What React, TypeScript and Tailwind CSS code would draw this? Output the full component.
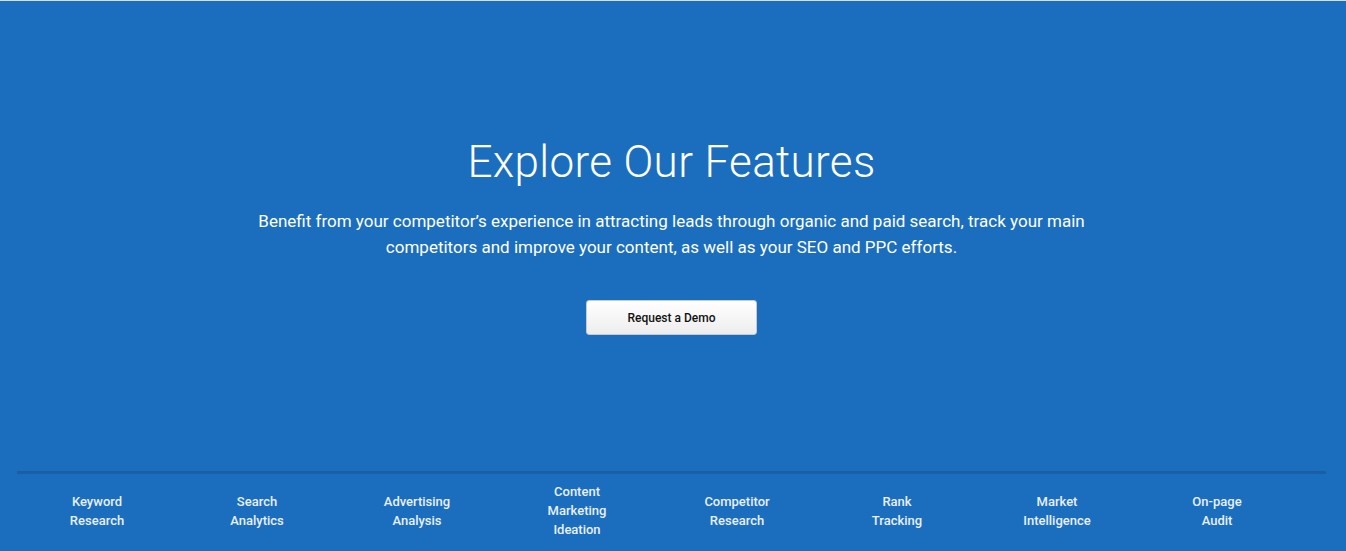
import React from 'react';

const FEATURES: string[][] = [
  ['Keyword', 'Research'],
  ['Search', 'Analytics'],
  ['Advertising', 'Analysis'],
  ['Content', 'Marketing', 'Ideation'],
  ['Competitor', 'Research'],
  ['Rank', 'Tracking'],
  ['Market', 'Intelligence'],
  ['On-page', 'Audit'],
];

const App: React.FC = () => {
  return (
    <div
      className="h-[551px] w-full bg-[#1b6ebd] border-t border-[#dcdcdc] flex flex-col overflow-hidden"
      style={{ fontFamily: 'Roboto, "Liberation Sans", sans-serif' }}
    >
      {/* Hero */}
      <div className="flex flex-col items-center pt-[135px] pr-[3px] h-[470px]">
        <h1 className="text-[44px] leading-[52px] font-light text-white tracking-[0.35px]">
          Explore Our Features
        </h1>
        <p className="mt-5 max-w-[860px] text-center text-[17px] leading-[26px] text-white">
          Benefit from your competitor’s experience in attracting leads through organic and paid search, track your main
          competitors and improve your content, as well as your SEO and PPC efforts.
        </p>
        <button className="mt-10 w-[171px] h-[35px] rounded-[3px] border border-[#c9c9c9] bg-gradient-to-b from-white to-[#ededed] text-[12px] font-medium text-[#111]">
          Request a Demo
        </button>
      </div>

      {/* Feature nav */}
      <div className="mx-[17px] mr-[20px] border-t-[3px] border-[#1a5fa6]">
        <div className="flex h-[73px] items-center">
          {FEATURES.map((lines, i) => (
            <div key={i} className="w-[160px] text-center text-[13px] leading-[19px] font-medium text-[#e9f0fa]">
              {lines.map((l, j) => (
                <div key={j}>{l}</div>
              ))}
            </div>
          ))}
        </div>
      </div>
    </div>
  );
};

export default App;
